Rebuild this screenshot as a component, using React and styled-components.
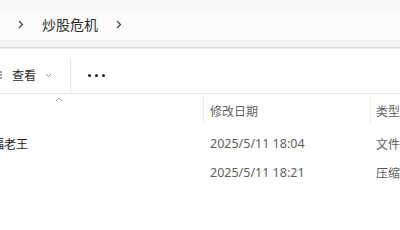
import React from "react";
import styled, { createGlobalStyle } from "styled-components";

const Global = createGlobalStyle`
  html, body { margin: 0; padding: 0; background: #ffffff; overflow: hidden; }
  body { font-family: "Noto Sans", "Noto Sans CJK SC", sans-serif; color: #1b1b1b; }
`;

const Window = styled.div`
  width: 400px;
  height: 230px;
  overflow: hidden;
  display: flex;
  flex-direction: column;
`;

const AddressBar = styled.div`
  height: 47px;
  flex: none;
  background: linear-gradient(#f7f7f7 0, #f8f8f8 10px, #fbfbfb 12px, #fbfbfb 40px, #f4f4f4 40px, #f4f4f4 47px);
  border-bottom: 1px solid #d8d8d8;
  box-shadow: 0 1px 0 #eeeeee;
`;

const Crumbs = styled.div`
  height: 40px;
  display: flex;
  align-items: center;
  padding-left: 18px;
  padding-top: 8px;
  box-sizing: border-box;
`;

const Crumb = styled.span`
  font-family: "Noto Sans CJK SC", sans-serif;
  font-size: 14px;
  color: #2e2e2e;
  margin: 0 18px 0 18px;
  line-height: 1;
`;

const Toolbar = styled.div`
  height: 45px;
  margin-top: 1px;
  flex: none;
  box-sizing: border-box;
  padding-top: 8px;
  display: flex;
  align-items: center;
  border-bottom: 1px solid #e6e6e6;
`;

const ToolButton = styled.div`
  display: flex;
  align-items: center;
  gap: ${(p) => p.$gap || 0}px;
  margin-left: ${(p) => p.$ml || 0}px;
`;

const ToolLabel = styled.span`
  font-family: "Noto Sans CJK SC", sans-serif;
  font-size: 12px;
  color: #2a2a2a;
  line-height: 1;
`;

const VSep = styled.div`
  width: 1px;
  height: 32px;
  background: #e3e3e3;
  margin-left: 18px;
`;

const HeaderRow = styled.div`
  height: 33px;
  flex: none;
  display: grid;
  grid-template-columns: 203px 167px 1fr;
  position: relative;
`;

const HeaderCell = styled.div`
  display: flex;
  align-items: center;
  padding-left: ${(p) => p.$pl || 0}px;
  border-left: ${(p) => (p.$sep ? "1px solid #ececec" : "none")};
  font-family: "Noto Sans CJK SC", sans-serif;
  font-size: 12px;
  color: #626262;
  margin-top: 1px;
  margin-bottom: 4px;
  padding-top: 3px;
`;

const SortCaret = styled.svg`
  position: absolute;
  left: 55px;
  top: 3px;
`;

const Rows = styled.div`
  padding-top: 2px;
`;

const Row = styled.div`
  height: 29px;
  display: grid;
  grid-template-columns: 203px 167px 1fr;
  align-items: center;
`;

const Cell = styled.div`
  padding-left: ${(p) => p.$pl || 0}px;
  font-family: "Noto Sans", "Noto Sans CJK SC", sans-serif;
  font-size: ${(p) => p.$size || 12}px;
  color: ${(p) => p.$color || "#222222"};
  white-space: nowrap;
`;

const CjkText = styled.span`
  display: inline-block;
  margin-left: ${(p) => p.$ml || 0}px;
  font-family: "Noto Sans CJK SC", sans-serif;
  font-size: 12px;
`;

const Chevron = () => (
  <svg width="6" height="9" viewBox="0 0 6 9">
    <path d="M1 1l3.5 3.5L1 8" fill="none" stroke="#3a3a3a" strokeWidth="1.1" />
  </svg>
);

export default function App() {
  return (
    <>
      <Global />
      <Window>
        <AddressBar>
          <Crumbs>
            <Chevron />
            <Crumb>炒股危机</Crumb>
            <Chevron />
          </Crumbs>
        </AddressBar>
        <Toolbar>
          <ToolButton $ml={-7} $gap={9}>
            <svg width="10" height="10" viewBox="0 0 10 10">
              <path d="M0 2h9M0 5h9M0 8h9" stroke="#444" strokeWidth="1" />
            </svg>
            <ToolLabel>查看</ToolLabel>
            <svg width="7" height="5" viewBox="0 0 7 5">
              <path d="M1 1l2.5 2.5L6 1" fill="none" stroke="#8a8a8a" strokeWidth="0.9" />
            </svg>
          </ToolButton>
          <VSep />
          <ToolButton $ml={17} $gap={4}>
            {[0, 1, 2].map((i) => (
              <svg key={i} width="3" height="3" viewBox="0 0 3 3">
                <circle cx="1.5" cy="1.5" r="1.5" fill="#1f1f1f" />
              </svg>
            ))}
          </ToolButton>
        </Toolbar>
        <HeaderRow>
          <HeaderCell />
          <SortCaret width="8" height="5" viewBox="0 0 8 5">
            <path d="M1 4l3-3 3 3" fill="none" stroke="#8a8a8a" strokeWidth="0.9" />
          </SortCaret>
          <HeaderCell $sep $pl={6}>修改日期</HeaderCell>
          <HeaderCell $sep $pl={5}>类型</HeaderCell>
        </HeaderRow>
        <Rows>
          <Row>
            <Cell><CjkText $ml={-8}>福老王</CjkText></Cell>
            <Cell $pl={7} $size={12.5} $color="#5e5e5e">2025/5/11 18:04</Cell>
            <Cell $pl={6} $color="#5e5e5e"><CjkText>文件</CjkText></Cell>
          </Row>
          <Row>
            <Cell />
            <Cell $pl={7} $size={12.5} $color="#5e5e5e">2025/5/11 18:21</Cell>
            <Cell $pl={6} $color="#5e5e5e"><CjkText>压缩</CjkText></Cell>
          </Row>
        </Rows>
      </Window>
    </>
  );
}
